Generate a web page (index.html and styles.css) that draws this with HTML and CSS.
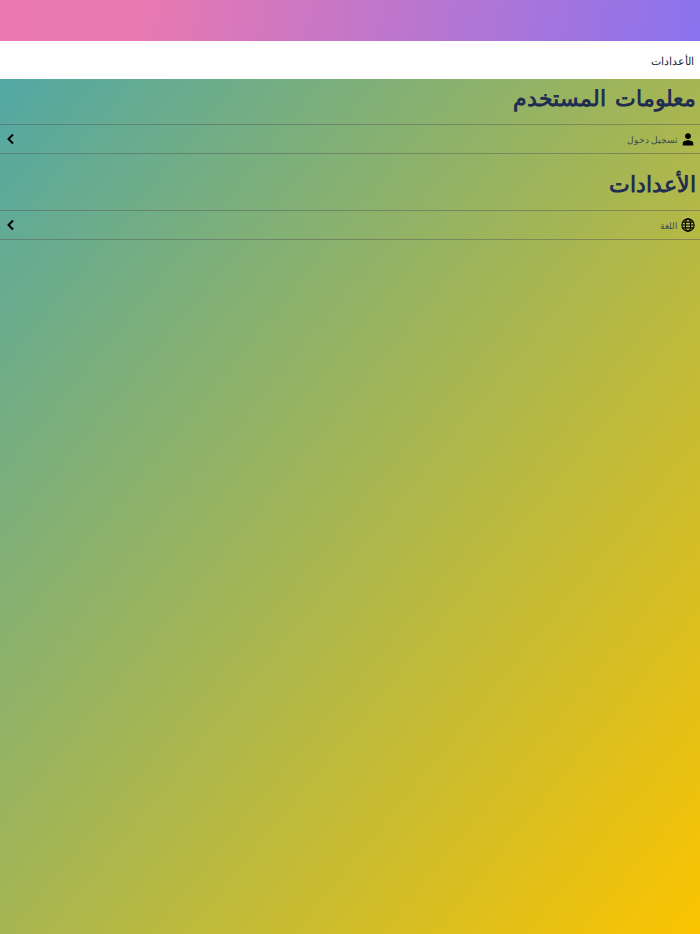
FILE: index.html
```html
<!DOCTYPE html>
<html lang="ar" dir="rtl">
<head>
  <meta charset="UTF-8" />
  <meta name="viewport" content="width=device-width, initial-scale=1.0" />
  <title>الأعدادات</title>
  <link rel="stylesheet" href="styles.css">
</head>
<body>

  <div class="top-bar"></div>

  <header class="page-header">
    <span class="page-title">الأعدادات</span>
  </header>

  <main class="content">
    <h2 class="section-title">معلومات المستخدم</h2>
    <div class="list-row">
      <svg class="row-icon" viewBox="0 0 24 24" aria-hidden="true">
        <circle cx="12" cy="7" r="5"/>
        <path d="M3 23v-3.500c0-3.500 4.500-5.500 9-5.500s9 2 9 5.500V23z"/>
      </svg>
      <span class="row-label">تسجيل دخول</span>
      <svg class="row-arrow" viewBox="0 0 10 14" aria-hidden="true">
        <path d="M8 2.500 3.500 7 8 11.500"/>
      </svg>
    </div>

    <h2 class="section-title section-title-second">الأعدادات</h2>
    <div class="list-row">
      <svg class="row-icon globe" viewBox="0 0 24 24" aria-hidden="true">
        <circle cx="12" cy="12" r="10.500"/>
        <ellipse cx="12" cy="12" rx="4.500" ry="10.500"/>
        <path d="M2 12h20M3.500 7h17M3.500 17h17"/>
      </svg>
      <span class="row-label">اللغة</span>
      <svg class="row-arrow" viewBox="0 0 10 14" aria-hidden="true">
        <path d="M8 2.500 3.500 7 8 11.500"/>
      </svg>
    </div>
  </main>

</body>
</html>
```

FILE: styles.css
```css
html, body {
  height: 100%;
}

body {
  margin: 0;
  font-family: "Noto Sans", sans-serif;
  display: flex;
  flex-direction: column;
  color: #1f2d50;
}

.top-bar {
  height: 41px;
  background: linear-gradient(100deg, #e979ae 0%, #e879b0 20%, #8a73ee 100%);
}

.page-header {
  height: 38px;
  background-color: #fff;
  display: flex;
  align-items: center;
  padding: 0 6px;
}

.page-title {
  font-size: 11px;
  letter-spacing: -0.5px;
  color: #222b3a;
}

.content {
  flex: 1;
  background: linear-gradient(to bottom right, #52a8a4 0%, #fbc400 100%);
}

.section-title {
  margin: 0;
  height: 45px;
  padding: 0 4px;
  font-size: 21.5px;
  font-weight: bold;
  line-height: 38px;
  word-spacing: 3px;
  color: #1f2d50;
}

.section-title-second {
  height: 56px;
  line-height: 60px;
}

.list-row {
  height: 28px;
  display: flex;
  align-items: center;
  gap: 3px;
  padding: 0 5px;
  border-top: 1px solid rgba(90, 90, 90, 0.5);
  border-bottom: 1px solid rgba(90, 90, 90, 0.5);
}

.row-icon {
  width: 14px;
  height: 14px;
}

.globe {
  fill: none;
  stroke: #000;
  stroke-width: 2;
}

.row-label {
  font-size: 9px;
  letter-spacing: -0.4px;
  color: #3d4a50;
}

.row-arrow {
  width: 10px;
  height: 14px;
  margin-right: auto;
  fill: none;
  stroke: #000;
  stroke-width: 2;
}
```
